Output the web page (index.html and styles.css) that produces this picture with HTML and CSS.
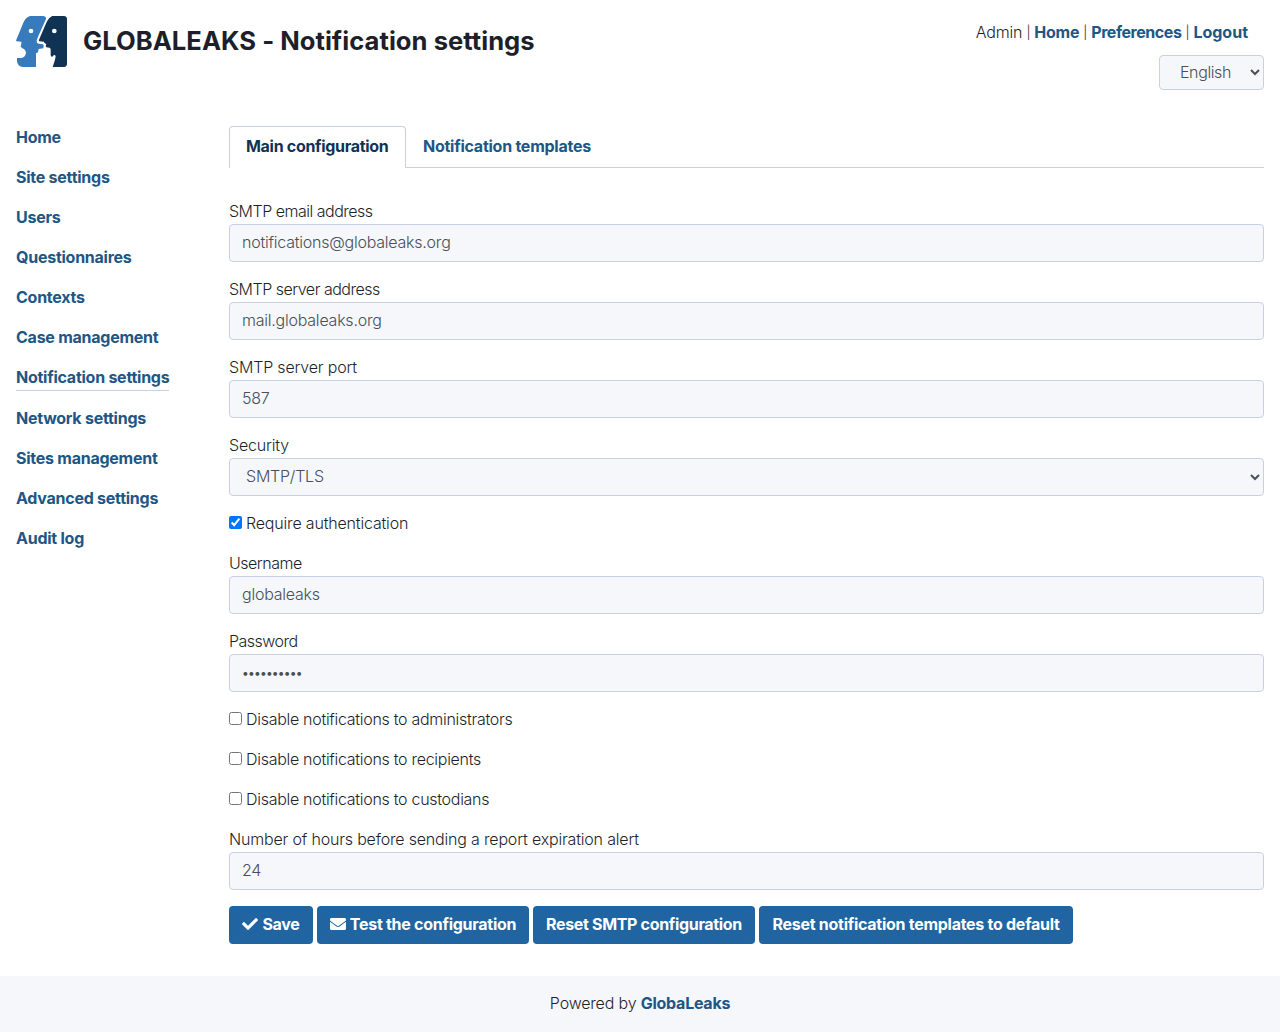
FILE: index.html
```html
<!DOCTYPE html>
<html lang="en">
<head>
<meta charset="utf-8">
<title>GLOBALEAKS - Notification settings</title>
<link rel="stylesheet" href="styles.css">
</head>
<body>
<header class="header">
  <svg class="logo" viewBox="0 0 153 153" aria-label="GlobaLeaks">
    <path fill="#377bbc" d="M42 0H81Q91 1 90 9L66 62L62 74Q61 82 68 83L80 85Q84 86 83 91L82 97L68 99L66 109L60 112V153H21Q4 152 3 135V126H15Q28 124 30 110Q29 100 17 95L14 91L16 84V77L2 76Q-1 75 1 71L22 20Q29 4 42 0Z"/>
    <path fill="#103253" d="M109 0H144Q153 1 153 9V144Q152 153 144 153H110L117 131L119 120Q116 114 111 119L108 124L104 118V99L101 95L91 94L89 90L91 85L85 80L84 77L70 76Q67 74 70 69L91 20Q99 4 109 0Z"/>
    <circle cx="45" cy="45" r="7" fill="#fff"/><circle cx="115" cy="45" r="7" fill="#fff"/>
  </svg>
  <h1 class="title">GLOBALEAKS - Notification settings</h1>
  <div class="session">
    <div class="session-links"><span>Admin</span><span class="sep">|</span><a>Home</a><span class="sep">|</span><a class="preferences">Preferences</a><span class="sep">|</span><a class="logout">Logout</a></div>
    <select class="control language"><option>English</option></select>
  </div>
</header>
<div class="layout">
  <nav class="sidebar">
    <a>Home</a><a>Site settings</a><a>Users</a><a>Questionnaires</a><a>Contexts</a><a>Case management</a><a class="current">Notification settings</a><a>Network settings</a><a>Sites management</a><a>Advanced settings</a><a>Audit log</a>
  </nav>
  <main class="content">
    <div class="tabs"><a class="tab active">Main configuration</a><a class="tab">Notification templates</a></div>
    <form class="form">
      <label class="field"><span class="tight">SMTP email address</span><input class="control" type="text" value="notifications@globaleaks.org"></label>
      <label class="field"><span class="tight">SMTP server address</span><input class="control" type="text" value="mail.globaleaks.org"></label>
      <label class="field"><span>SMTP server port</span><input class="control" type="text" value="587"></label>
      <label class="field"><span>Security</span><select class="control"><option>SMTP/TLS</option></select></label>
      <label class="check"><input type="checkbox" checked><span>Require authentication</span></label>
      <label class="field"><span class="tight">Username</span><input class="control" type="text" value="globaleaks"></label>
      <label class="field"><span class="tight">Password</span><input class="control password" type="password" value="globaleaks"></label>
      <label class="check"><input type="checkbox"><span class="snug">Disable notifications to administrators</span></label>
      <label class="check"><input type="checkbox"><span class="snug">Disable notifications to recipients</span></label>
      <label class="check"><input type="checkbox"><span class="snug">Disable notifications to custodians</span></label>
      <label class="field"><span>Number of hours before sending a report expiration alert</span><input class="control" type="text" value="24"></label>
      <div class="actions">
        <button type="button" class="btn b-save"><svg viewBox="0 0 512 512"><path d="M173.900 439.400l-166.400-166.400c-10-10-10-26.200 0-36.200l36.200-36.200c10-10 26.200-10 36.200 0L192 312.690 432.100 72.600c10-10 26.200-10 36.200 0l36.200 36.200c10 10 10 26.200 0 36.200l-294.400 294.400c-10 10-26.200 10-36.200 0z"/></svg><span>Save</span></button>
        <button type="button" class="btn b-test"><svg viewBox="0 0 512 512"><path d="M502.300 190.800c3.900-3.100 9.700-.2 9.700 4.700V400c0 26.500-21.500 48-48 48H48c-26.500 0-48-21.500-48-48V195.600c0-5 5.700-7.800 9.700-4.700 22.400 17.400 52.100 39.500 154.100 113.600 21.100 15.400 56.700 47.800 92.200 47.600 35.700.3 72-32.800 92.300-47.600 102-74.100 131.600-96.300 154-113.700zM256 320c23.200.4 56.600-29.200 73.400-41.400 132.700-96.300 142.800-104.700 173.400-128.700 5.800-4.500 9.200-11.500 9.200-18.900v-19c0-26.500-21.500-48-48-48H48c-26.500 0-48 21.500-48 48v19c0 7.400 3.400 14.300 9.200 18.900 30.600 23.900 40.700 32.400 173.400 128.700 16.800 12.200 50.200 41.800 73.400 41.400z"/></svg><span>Test the configuration</span></button>
        <button type="button" class="btn b-smtp"><span>Reset SMTP configuration</span></button>
        <button type="button" class="btn b-templates"><span>Reset notification templates to default</span></button>
      </div>
    </form>
  </main>
</div>
<footer class="footer"><span>Powered by</span> <a>GlobaLeaks</a></footer>
</body>
</html>
```
FILE: styles.css
```css
* { box-sizing: border-box; }
body {
  margin: 0;
  min-height: 1032px;
  display: flex;
  flex-direction: column;
  background: #fff;
  color: #1d1f2a;
  font: 300 16px/22px Inter, "Open Sans", sans-serif;
  letter-spacing: -0.18px;
}
a { color: #205685; font-weight: 700; letter-spacing: -0.25px; text-decoration: none; }
.header { display: flex; align-items: flex-start; height: 126px; padding: 16px 16px 0; }
.logo { width: 51px; height: 51px; flex: none; }
.title { margin: 9px 0 0 16px; font-size: 25.6px; line-height: 31px; font-weight: 700; letter-spacing: 0.03px; white-space: nowrap; }
.session { margin-left: auto; padding-top: 5px; display: flex; flex-direction: column; align-items: flex-end; }
.session-links { display: flex; height: 24px; padding-right: 16px; white-space: nowrap; }
.session-links .sep { width: 12px; text-align: center; font-size: 13px; }
.session-links .preferences { letter-spacing: -0.45px; }
.session-links .logout { letter-spacing: 0; }
.control {
  display: block;
  width: 100%;
  height: 38px;
  padding: 5px 12px 7px;
  border: 1px solid #c7d1e2;
  border-radius: 4px;
  background-color: #f5f7fb;
  color: #495057;
  font: inherit;
  letter-spacing: -0.23px;
}
select.control { padding: 5px 12px 7px; }
.control.password { font-size: 12px; font-weight: 400; letter-spacing: -0.78px; }
.language.control { width: 105px; height: 35px; margin-top: 10px; padding: 3px 0 5px 16px; letter-spacing: -0.4px; }
.layout { display: flex; height: 850px; padding: 0 16px; }
.sidebar { width: 213px; flex: none; display: flex; flex-direction: column; align-items: flex-start; gap: 16px; }
.sidebar a { padding-bottom: 2px; white-space: nowrap; }
.sidebar .current { border-bottom: 1px solid #c7d1e2; }
.content { flex: 1; min-width: 0; }
.tabs { display: flex; height: 42px; border-bottom: 1px solid #c7d1e2; }
.tab { height: 42px; padding: 9px 17px; white-space: nowrap; }
.tab.active { width: 177px; padding: 8px 16px; background: #fff; color: #103253; letter-spacing: -0.3px; border: 1px solid #c7d1e2; border-bottom: 0; border-radius: 4px 4px 0 0; }
.form { display: flex; flex-direction: column; gap: 16px; padding-top: 32px; }
.field { display: block; }
.field > span { display: block; padding-bottom: 2px; white-space: nowrap; }
.field > .tight { letter-spacing: -0.5px; }
.check { display: flex; gap: 4px; height: 24px; }
.check .snug { letter-spacing: -0.29px; }
.check input { width: 13px; height: 13px; margin: 4px 0 0; }
.actions { display: flex; gap: 4px; }
.btn { display: flex; align-items: center; justify-content: center; gap: 4px; height: 38px; padding: 0; border: 0; border-radius: 4px; background: #2065a2; color: #fff; font: inherit; font-weight: 700; letter-spacing: -0.27px; white-space: nowrap; }
.btn span { padding-bottom: 2px; }
.btn svg { width: 16px; height: 16px; margin-bottom: 2px; fill: currentColor; }
.b-save { width: 84px; }
.b-test { width: 212px; }
.b-smtp { width: 222px; letter-spacing: -0.33px; }
.b-templates { width: 314px; }
.footer { height: 56px; padding: 16px; text-align: center; background: #f5f7fb; }
```
